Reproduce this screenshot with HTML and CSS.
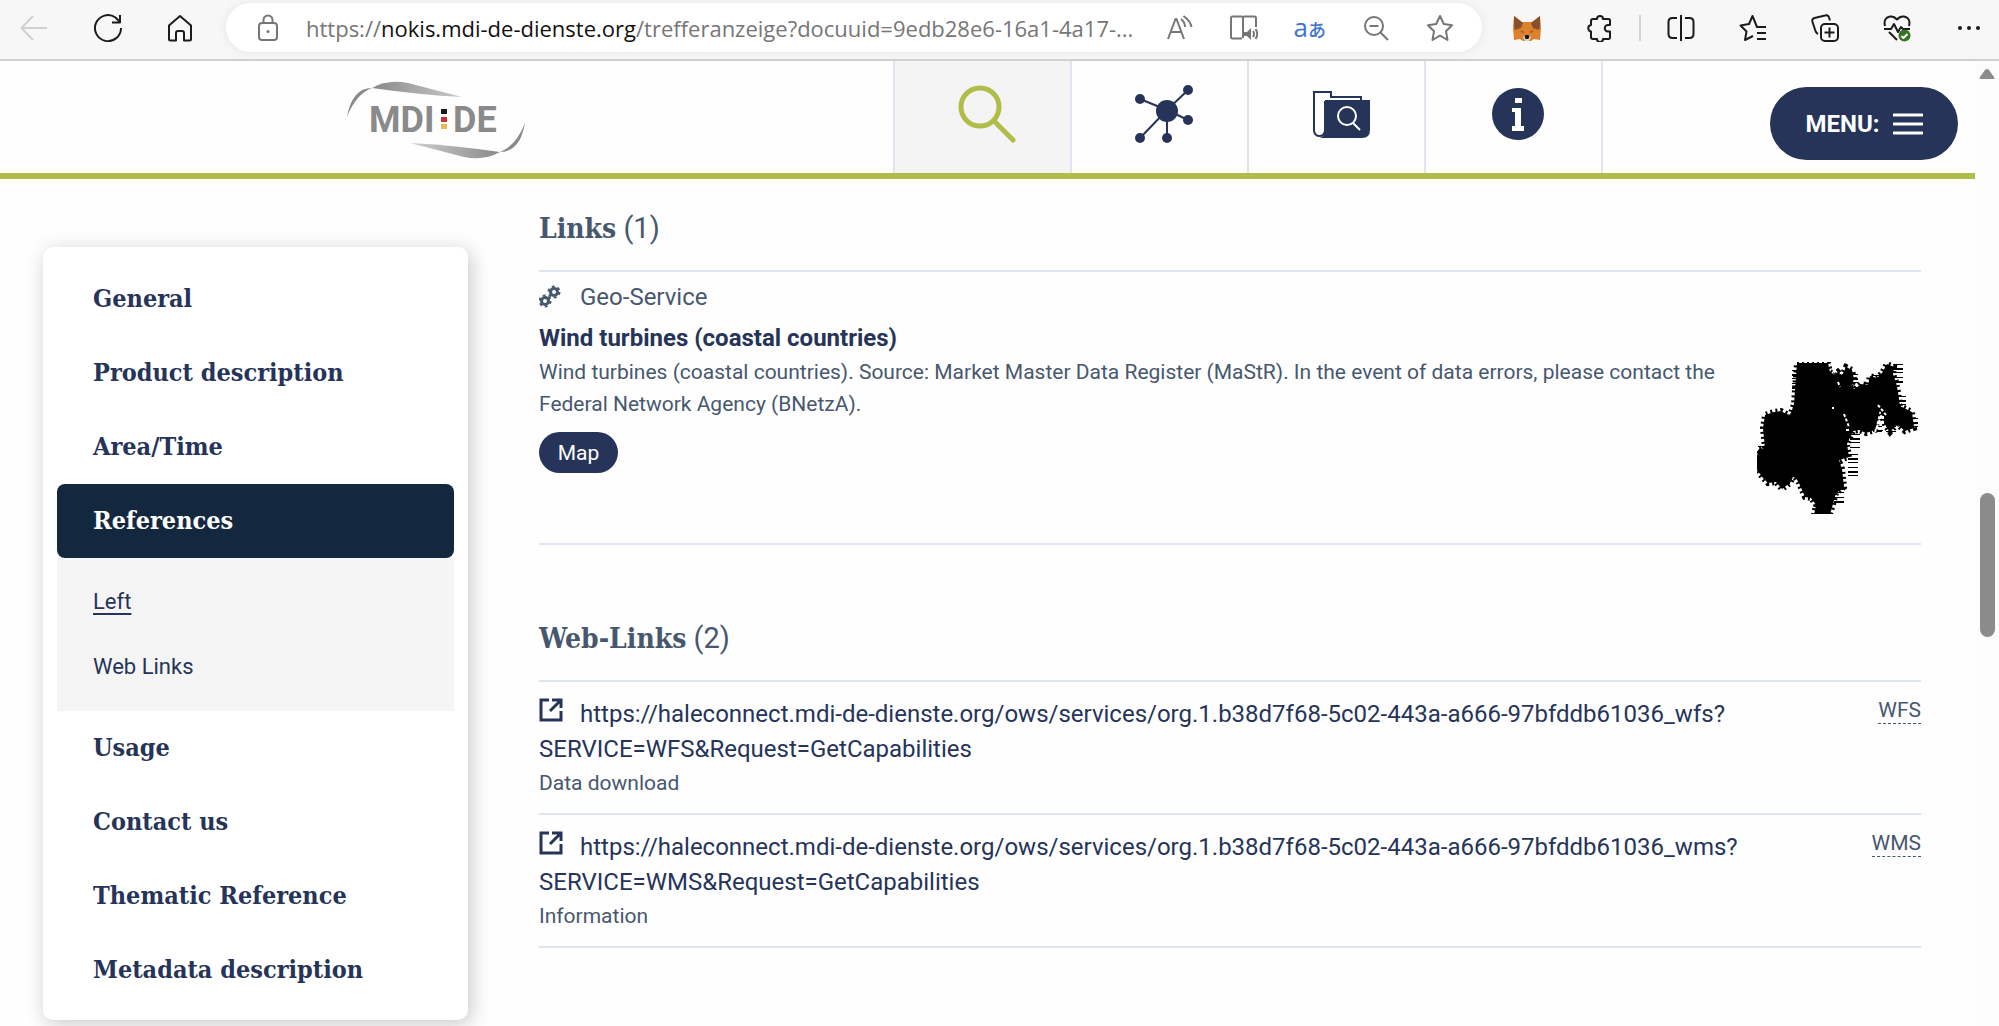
FILE: index.html
```html
<!DOCTYPE html>
<html lang="en">
<head>
<meta charset="utf-8">
<meta name="viewport" content="width=device-width, initial-scale=1">
<title>MDI-DE – References</title>
<link rel="stylesheet" href="styles.css">
</head>
<body>
<div class="toolbar">
  <button class="tool back" aria-label="Back"><svg width="28" height="28" viewBox="0 0 28 28"><path d="M27 14H1.500M13 2 1.500 14 13 26"/></svg></button>
  <button class="tool reload" aria-label="Reload"><svg width="28" height="28" viewBox="0 0 28 28"><path d="M27 14A13 13 0 1 1 21.500 3.500l4 4M26 1v7.500h-8"/></svg></button>
  <button class="tool home" aria-label="Home"><svg width="28" height="28" viewBox="0 0 28 28"><path d="M3 11.500 14 2l11 9.500V25q0 1.500-1.500 1.500H18V19q0-2-2-2h-4q-2 0-2 2v7.500H4.500Q3 26.500 3 25z"/></svg></button>
  <div class="address">
    <svg class="lock" width="22" height="28" viewBox="0 0 22 28"><rect x="2" y="9" width="18" height="17" rx="3"/><path d="M6.500 9V6a4.500 4.500 0 0 1 9 0v3"/><circle class="solid" cx="11" cy="17.500" r="1.500"/></svg>
    <div class="url"><span>https://</span><b>nokis.mdi-de-dienste.org</b><span>/trefferanzeige?docuuid=9edb28e6-16a1-4a17-...</span></div>
    <div class="address-tools">
      <button class="tool" aria-label="Read aloud"><svg width="28" height="28" viewBox="0 0 28 28"><path d="M2 25 9.500 5h1L18 25M5 18h10M15 5q4 3 4 8M17.500 2q7 5 8 11"/></svg></button>
      <button class="tool" aria-label="Immersive reader"><svg width="28" height="28" viewBox="0 0 28 28"><path d="M13 24V4q0-1.500-1.500-1.500H2.500Q1 2.500 1 4v19q0 1.500 1.500 1.500H12M13 4q0-1.500 1.500-1.500h10Q26 2.500 26 4v9"/><path class="solid" d="M14 18h3l4-4v12l-4-4h-3z"/><path d="M23 17q2 3 0 6M25.500 15q3.500 5 0 10"/></svg></button>
      <button class="tool translate" aria-label="Translate">a<small>あ</small></button>
      <button class="tool" aria-label="Zoom out"><svg width="28" height="28" viewBox="0 0 28 28"><circle cx="12" cy="12" r="9"/><path d="M7.500 12h9M18.500 18.500 26 26"/></svg></button>
      <button class="tool" aria-label="Add to favourites"><svg width="28" height="28" viewBox="0 0 28 28"><path d="m14 2 3.800 8L26 11.200l-6 6 1.500 8.800L14 21.500 6.500 26 8 17.200l-6-6L10.200 10z"/></svg></button>
    </div>
  </div>
  <div class="extensions">
    <button class="tool" aria-label="Wallet"><svg class="fox" width="28" height="28" viewBox="0 0 28 28"><path fill="#dd812e" d="m1 2 8 6h10l8-6 1 12-1 12-6-1-3 2h-8l-3-2-6 1L0 14z"/><path fill="#87502a" d="m1 2 9 7-2 5-6 2L1 12zM27 2l-9 7 2 5 6 2 1-4z"/><path fill="#a9561c" d="m7 16 5 2-3 1zM21 16l-5 2 3 1z"/><path fill="#ddd6cd" d="m10 23 2-2h4l2 2-2 4h-4z"/><path fill="#171717" d="m11.500 22 1-1h3l1 1-1 3h-3z"/></svg></button>
    <button class="tool" aria-label="Extensions"><svg width="28" height="28" viewBox="0 0 28 28"><path d="M8 5h4a3 3 0 1 1 6 0h5.500q1.500 0 1.500 1.500V11h-2a3.200 3.200 0 0 0 0 6.500h2V23q0 2-1.500 2H18a3 3 0 0 1-6 0H8q-2 0-2-2v-5.500a3.300 3.300 0 0 1 0-6.500V7q0-2 2-2z"/></svg></button>
    <span class="divider"></span>
    <button class="tool" aria-label="Split screen"><svg width="28" height="28" viewBox="0 0 28 28"><path d="M14 1v26M10 4H5.500Q1.500 4 1.500 8v12q0 4 4 4H10M18 4h4.500q4 0 4 4v12q0 4-4 4H18"/></svg></button>
    <button class="tool" aria-label="Favourites"><svg width="28" height="28" viewBox="0 0 28 28"><path d="M27 13h-9l-4.500-11L10 10l-8.500 1.500 6 6L6 26l8-4M18 19h9M18 25h9"/></svg></button>
    <button class="tool" aria-label="Collections"><svg width="28" height="28" viewBox="0 0 28 28"><rect x="10" y="10" width="17" height="17" rx="4"/><path d="M18.500 13.500v10M13.500 18.500h10M7 20q-2-1-2.500-3L1.500 8q-1-3 2-4L14 1.500q3-1 4 2l1 3"/></svg></button>
    <button class="tool" aria-label="Browser essentials"><svg width="28" height="28" viewBox="0 0 28 28"><path d="M2 12Q0 4 7 2.500q4-.500 7 3 3-3.500 7-3 7 1.500 5 9.500M1 15h7l3-5 4 8 3-5 2 2h7M6 18l8 8"/><circle fill="#347321" stroke="none" cx="21.500" cy="21.500" r="6"/><path stroke="#fff" d="m18.500 22 2 2 4-4"/></svg></button>
    <button class="tool" aria-label="Settings"><svg width="28" height="28" viewBox="0 0 28 28"><g class="solid"><circle cx="5" cy="14" r="2"/><circle cx="14" cy="14" r="2"/><circle cx="23" cy="14" r="2"/></g></svg></button>
  </div>
</div>

<div class="viewport">
  <div class="page">
    <header class="site-header">
      <a class="logo" href="#" aria-label="MDI-DE">
        <svg width="180" height="80" viewBox="0 0 180 80">
          <defs>
            <linearGradient id="band-top"><stop offset="0" stop-color="#8a8a8a"/><stop offset="1" stop-color="#c9c9c9"/></linearGradient>
            <linearGradient id="band-bottom"><stop offset="0" stop-color="#cfcfcf"/><stop offset="1" stop-color="#8a8a8a"/></linearGradient>
          </defs>
          <path fill="#8a8a8a" d="M1 37Q6 8 26 8Q10 14 1 37z"/>
          <path fill="url(#band-top)" d="M26 8Q42-1 62 3L116 17Q75 15 26 8z"/>
          <path fill="#8a8a8a" d="M179 43Q174 72 154 72Q170 66 179 43z"/>
          <path fill="url(#band-bottom)" d="M154 72Q138 81 118 77L64 63Q105 65 154 72z"/>
          <text class="logo-text" x="23" y="52">MDI</text>
          <rect fill="#1a1a1a" x="95" y="29" width="6" height="5"/><rect fill="#cc3227" x="95" y="37" width="6" height="5"/><rect fill="#e5bd55" x="95" y="44" width="6" height="5"/>
          <text class="logo-text" x="107" y="52">DE</text>
        </svg>
      </a>
      <nav class="main-nav" aria-label="Main">
        <a class="current" href="#" aria-label="Search"><svg width="58" height="58" viewBox="0 0 58 58"><circle cx="22" cy="22" r="19" fill="none" stroke="#b0bd48" stroke-width="5"/><path d="M36 36 55 55" stroke="#b0bd48" stroke-width="5" stroke-linecap="round"/></svg></a>
        <a href="#" aria-label="Network"><svg width="58" height="58" viewBox="0 0 58 58"><path d="M5 14 32 25 53 5M5 53 32 25 53 35M32 25v28" fill="none" stroke="#263459" stroke-width="2"/><g fill="#263459"><circle cx="32" cy="26" r="11"/><circle cx="5" cy="14" r="5"/><circle cx="53" cy="5" r="5"/><circle cx="53" cy="35" r="5"/><circle cx="5" cy="53" r="5"/><circle cx="32" cy="53" r="5"/></g></svg></a>
        <a href="#" aria-label="Catalogue"><svg width="58" height="58" viewBox="0 0 58 58"><path d="M13 16v30q-1 5-5.500 5T2 46V7h17v5h30v6" fill="none" stroke="#263459" stroke-width="2"/><path fill="#263459" d="M13 15h45v30q0 8-8 8H8q5-2 5-8z"/><circle cx="35" cy="31" r="9" fill="none" stroke="#fff" stroke-width="2"/><path d="m41 38 7 7" stroke="#fff" stroke-width="2"/></svg></a>
        <a href="#" aria-label="Information"><svg width="58" height="58" viewBox="0 0 58 58"><circle cx="29" cy="29" r="26" fill="#263459"/><path fill="#fff" d="M26 13h7v5h-7zM23 23h9v18h3v5H23v-5h3V27h-3z"/></svg></a>
      </nav>
      <button class="menu">MENU: <svg width="30" height="22" viewBox="0 0 30 22"><path d="M1 2h28M1 11h28M1 20h28" stroke="#fff" stroke-width="3" stroke-linecap="round"/></svg></button>
    </header>

    <div class="content">
      <nav class="sidebar" aria-label="Sections">
        <a href="#">General</a>
        <a href="#">Product description</a>
        <a href="#">Area/Time</a>
        <a class="active" href="#">References</a>
        <div class="subnav">
          <a class="selected" href="#links">Left</a>
          <a href="#weblinks">Web Links</a>
        </div>
        <a href="#">Usage</a>
        <a href="#">Contact us</a>
        <a href="#">Thematic Reference</a>
        <a href="#">Metadata description</a>
      </nav>
      <main class="main">
        <section id="links">
          <h2><b>Links</b> (1)</h2>
          <article class="service">
            <div class="service-body">
              <p class="kind"><svg width="22" height="24" viewBox="0 0 22 24"><g fill="none" stroke="#47586e"><circle cx="6" cy="16" r="3.500" stroke-width="3"/><circle cx="6" cy="16" r="5.500" stroke-width="2" stroke-dasharray="2.880 2.880"/><circle cx="15" cy="7" r="3.500" stroke-width="3"/><circle cx="15" cy="7" r="5.500" stroke-width="2" stroke-dasharray="2.880 2.880"/></g></svg>Geo-Service</p>
              <h3><a href="#">Wind turbines (coastal countries)</a></h3>
              <p class="description">Wind turbines (coastal countries). Source: Market Master Data Register (MaStR). In the event of data errors, please contact the Federal Network Agency (BNetzA).</p>
              <button class="map-button">Map</button>
            </div>
            <svg class="preview" width="164" height="152" viewBox="0 0 164 152" role="img" aria-label="Map preview">
              <path class="mass" d="M40 1h31l2 9 5 3 3-3 4 4 4-9 6 3 2 9-3 8 4 2 6-5 7 1 2-9 7 2 5-5 5-9 7 3-1 7 3 8 2 10 2 14 6 3 6 3 2 16-9 3-8-7-7 8-6-9-4-13-5 20-9 3-7-3-6 1-6 13 2 13-10 3 3 9 2 18-8 6-3 11-3 10-9 5-7-4 2-10-5-7-6-1-6-14-5-8-4 8-8 6-6-7-8 1-5-5-6-8-1-11 3-10 6-1-2-20 2-13 9-3 7-1 9 5 4-12 1-14z"/>
              <path class="fuzz" d="M40 8v22M6 84v18M141 2v20M96 12v14M121 13v16M144 34v12M134 56v16M156 56v12M96 92v26M82 122v20M62 126v20M28 116v6M15 104v6M121 64v6M98 72v14"/>
              <path class="holes" d="M87 52l5 13M121 43l8 10M118 70l7-18M89 68h5M126 72v-18M81 20l2 5M75 46h2"/>
            </svg>
          </article>
        </section>
        <section id="weblinks">
          <h2><b>Web-Links</b> (2)</h2>
          <ul class="weblinks">
            <li>
              <div class="weblink">
                <a href="#"><svg class="external" width="24" height="24" viewBox="0 0 24 24"><path d="M10 2H2v20h20V13M13 2h9v8M22 2 11 13"/></svg>https://haleconnect.mdi-de-dienste.org/ows/services/org.1.b38d7f68-5c02-443a-a666-97bfddb61036_wfs?<wbr>SERVICE=WFS&amp;Request=GetCapabilities</a>
                <p>Data download</p>
              </div>
              <abbr title="Web Feature Service">WFS</abbr>
            </li>
            <li>
              <div class="weblink">
                <a href="#"><svg class="external" width="24" height="24" viewBox="0 0 24 24"><path d="M10 2H2v20h20V13M13 2h9v8M22 2 11 13"/></svg>https://haleconnect.mdi-de-dienste.org/ows/services/org.1.b38d7f68-5c02-443a-a666-97bfddb61036_wms?<wbr>SERVICE=WMS&amp;Request=GetCapabilities</a>
                <p>Information</p>
              </div>
              <abbr title="Web Map Service">WMS</abbr>
            </li>
          </ul>
        </section>
      </main>
    </div>
  </div>
  <div class="scrollbar" aria-hidden="true">
    <svg width="16" height="12" viewBox="0 0 16 12"><path fill="#8b8b8b" d="M1 11q-1 0 0-2l5-7q2-2 4 0l5 7q1 2 0 2z"/></svg>
    <span class="thumb"></span>
  </div>
</div>
</body>
</html>
```

FILE: styles.css
```css
* { box-sizing: border-box; }

body {
  margin: 0;
  display: flex;
  flex-direction: column;
  height: 100vh;
  overflow: hidden;
  font: 21px/32px Roboto, sans-serif;
  color: #47586e;
  background: #fefefe;
}

a { color: #263459; text-decoration: none; }
h2, h3, p, ul { margin: 0; padding: 0; font-weight: 400; }
button { border: 0; padding: 0; background: none; font-family: inherit; }

/* Browser toolbar */
.toolbar {
  flex: none;
  display: flex;
  align-items: center;
  height: 61px;
  padding: 0 16px 4px 20px;
  border-bottom: 2px solid #d0d0d0;
  background: #f7f7f7;
}
.tool { flex: none; display: flex; color: #1b1b1b; }
.tool svg, .lock { fill: none; stroke: currentColor; stroke-width: 2; stroke-linejoin: round; }
.tool .solid, .lock .solid { fill: currentColor; stroke: none; }
.tool .fox { stroke: none; }
.back { color: #d0d0d0; }
.reload { margin-left: 46px; }
.home { margin-left: 44px; }
.address {
  flex: 1;
  display: flex;
  align-items: center;
  height: 49px;
  min-width: 0;
  margin: 0 31px 0 32px;
  padding: 0 28px 0 31px;
  border-radius: 25px;
  background: #fff;
  box-shadow: 0 0 8px #e4e4e4;
}
.lock { flex: none; color: #767676; }
.url {
  flex: 1;
  min-width: 0;
  margin-left: 27px;
  overflow: hidden;
  white-space: nowrap;
  font-family: "Open Sans", sans-serif;
  font-size: 22px;
  color: #767676;
}
.url b { font-weight: 400; color: #111; }
.address-tools { display: flex; align-items: center; gap: 36px; }
.address-tools .tool { color: #767676; }
.address-tools .translate { align-items: baseline; color: #3e74d1; font: 26px/28px "Open Sans", sans-serif; }
.translate small { font: 500 18px/28px "Noto Sans CJK JP", sans-serif; }
.extensions { display: flex; align-items: center; gap: 44px; }
.divider { width: 2px; height: 26px; margin: 0 -18px; background: #d4d4d4; }

.viewport { flex: 1; display: flex; min-height: 0; }
.page { flex: 1; min-width: 0; }

/* Page scrollbar */
.scrollbar {
  flex: none;
  display: flex;
  flex-direction: column;
  align-items: center;
  width: 24px;
  padding-top: 7px;
  background: #fcfcfc;
}
.thumb { width: 15px; height: 144px; margin-top: 413px; border-radius: 8px; background: #8b8b8b; }

/* Site header */
.site-header {
  display: flex;
  height: 118px;
  border-bottom: 6px solid #b0bd48;
}
.logo { flex: 1; display: flex; align-items: center; justify-content: center; padding: 5px 22px 0 0; }
.logo-text { font: 700 36px Roboto, sans-serif; fill: #8a8a8a; }
.main-nav { display: flex; border-left: 2px solid #e0e4f0; }
.main-nav a {
  width: 177px;
  display: flex;
  align-items: center;
  justify-content: center;
  padding: 0 0 6px 8px;
  border-right: 2px solid #e0e4f0;
}
.main-nav .current { background: #f4f4f4; }
.menu {
  display: flex;
  align-items: center;
  justify-content: center;
  gap: 13px;
  width: 188px;
  height: 73px;
  margin: 26px 17px 0 167px;
  border-radius: 37px;
  background: #263459;
  color: #fff;
  font-size: 24px;
  font-weight: 700;
}

/* Content */
.content { display: flex; align-items: flex-start; gap: 71px; padding: 0 54px 0 43px; }
.sidebar {
  flex: none;
  width: 425px;
  margin-top: 68px;
  padding: 15px 14px 13px;
  border-radius: 10px;
  background: #fff;
  box-shadow: 3px 4px 20px #c8c8c8;
}
.sidebar a { display: block; padding-left: 36px; font: 700 25px/74px "Roboto Slab", "DejaVu Serif Condensed", serif; }
.sidebar .active { border-radius: 8px; background: #13283e; color: #fff; }
.sidebar .subnav { padding: 11px 0 12px; background: #f5f5f5; }
.sidebar .subnav a { font: 22px/65px Roboto, sans-serif; }
.sidebar .selected { text-decoration: underline; text-underline-offset: 4px; }

.main { flex: 1; min-width: 0; }
h2 { padding: 29px 0 22px; border-bottom: 2px solid #e0e4f0; font-size: 29px; line-height: 40px; }
h2 b { font: 700 28px/30px "Roboto Slab", "DejaVu Serif Condensed", serif; }
.service { display: flex; gap: 24px; min-height: 273px; border-bottom: 2px solid #e0e4f0; }
.service-body { flex: 1; padding-top: 7px; }
.kind { display: flex; align-items: center; gap: 19px; margin-bottom: 5px; font-size: 24px; line-height: 36px; }
h3 { font-size: 24px; line-height: 36px; }
h3 a { font-weight: 700; }
.map-button {
  margin-top: 12px;
  width: 79px;
  height: 41px;
  border-radius: 21px;
  background: #263459;
  color: #fff;
  font-size: 21px;
}
.preview { flex: none; margin-top: 90px; }
.preview .mass { stroke: #000; stroke-width: 6; stroke-dasharray: 2 3; }
.preview .fuzz { fill: none; stroke: #000; stroke-width: 10; stroke-dasharray: 1 3 2 2 1 4; }
.preview .holes { fill: none; stroke: #fff; stroke-width: 2; stroke-dasharray: 3 2; }

#weblinks { padding-top: 44px; }
.weblinks { list-style: none; }
.weblinks li {
  display: flex;
  align-items: flex-start;
  justify-content: space-between;
  padding: 15px 0 14px;
  border-bottom: 2px solid #e0e4f0;
}
.weblink { font-size: 24px; line-height: 35px; }
.weblink p { font-size: 21px; line-height: 32px; }
.external { margin-right: 17px; fill: none; stroke: #263459; stroke-width: 3; }
abbr { border-bottom: 1px dashed #47586e; line-height: 26px; text-decoration: none; }
```
